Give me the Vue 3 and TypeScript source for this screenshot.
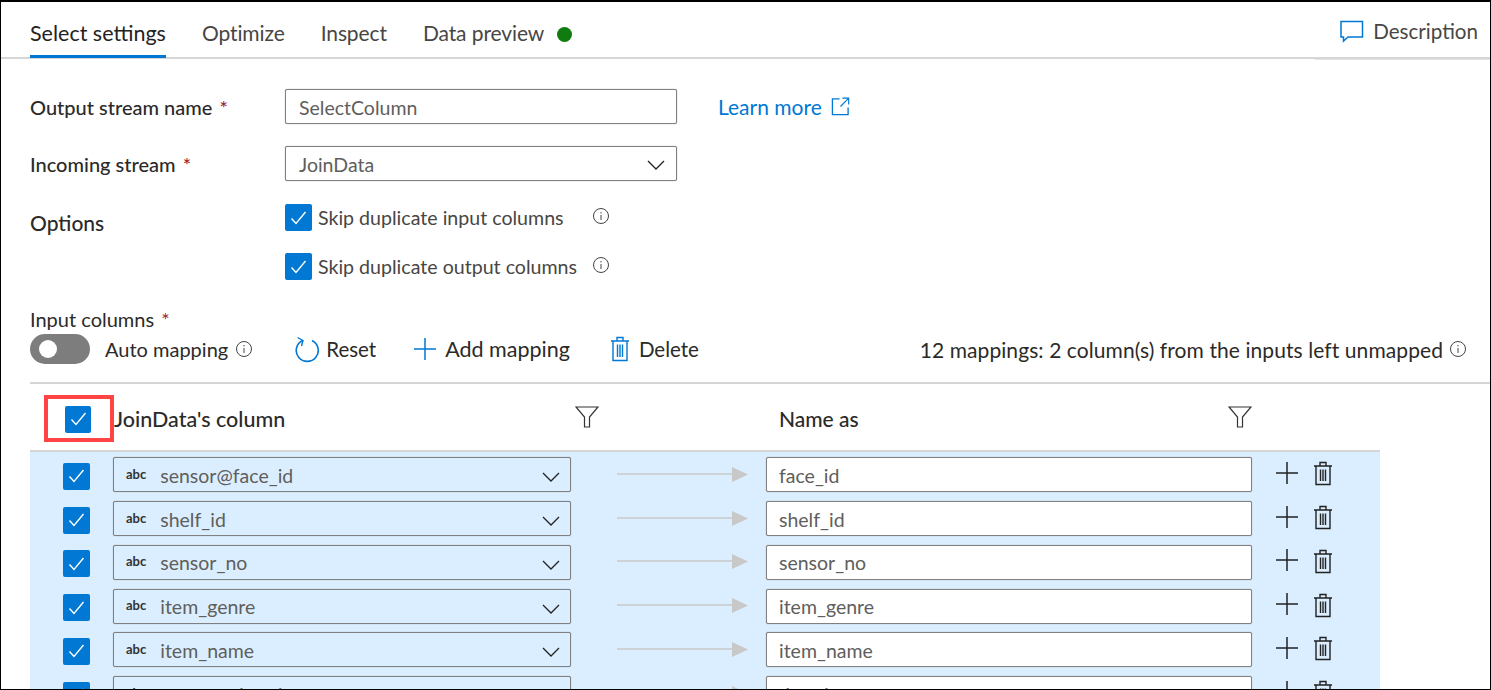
<template>
  <div class="frame">
    <div class="tabs">
      <div class="tab active">Select settings</div>
      <div class="tab">Optimize</div>
      <div class="tab">Inspect</div>
      <div class="tab">Data preview <span class="dot" /></div>
      <div class="desc">
        <svg width="26" height="24" viewBox="0 0 26 24" fill="none" stroke="#0078d4" stroke-width="1.5"><path d="M2 2.5h21.5v15.5H9l-4.5 4v-4H2z" /></svg>
        <span>Description</span>
      </div>
    </div>

    <div class="form">
      <div class="form-row first">
        <label>Output stream name <em>*</em></label>
        <div class="box">SelectColumn</div>
        <a class="learn">Learn more
          <svg width="19" height="19" viewBox="0 0 20 20" fill="none" stroke="#0078d4" stroke-width="1.4"><path d="M9 2H1.5v16.5H18V11" /><path d="M12 1.2h6.6v6.6M18.4 1.5 10 10" stroke-width="1.2" /></svg>
        </a>
      </div>
      <div class="form-row second">
        <label>Incoming stream <em>*</em></label>
        <div class="box select">JoinData
          <svg class="chev" width="18" height="10" viewBox="0 0 18 10" fill="none" stroke="#222" stroke-width="1.3"><path d="M1 1l8 8 8-8" /></svg>
        </div>
      </div>
      <div class="form-row options">
        <label>Options</label>
        <div class="checks">
          <div v-for="o in options" :key="o.text" class="check-line">
            <span class="cb"><svg width="17" height="14" viewBox="0 0 17 14" fill="none" stroke="#fff" stroke-width="1.4"><path d="M1.5 7.5l4.5 5 9.5-11.5" /></svg></span>
            <span class="check-text">{{ o.text }}</span>
            <svg class="info" width="18" height="18" viewBox="0 0 18 18" fill="none" stroke="#444" stroke-width="1"><circle cx="9" cy="9" r="7.5" /><path d="M9 8v5M9 5v1.4" /></svg>
          </div>
        </div>
      </div>
    </div>

    <div class="input-head">Input columns <em>*</em></div>
    <div class="toolbar">
      <span class="toggle"><span class="knob" /></span>
      <span class="auto">Auto mapping</span>
      <svg class="info auto-info" width="18" height="18" viewBox="0 0 18 18" fill="none" stroke="#444" stroke-width="1"><circle cx="9" cy="9" r="7.5" /><path d="M9 8v5M9 5v1.4" /></svg>
      <span class="action reset">
        <svg width="26" height="28" viewBox="0 0 26 28" fill="none" stroke="#0078d4" stroke-width="1.6"><path d="M8.5 5.5a11 11 0 1 0 9.5 0" /><path d="M3.5 2.5l5.5 3-1.5 5.5" stroke-width="1.4" /></svg>
        Reset
      </span>
      <span class="action add">
        <svg width="24" height="24" viewBox="0 0 24 24" stroke="#0078d4" stroke-width="1.5"><path d="M12 1v22M1 12h22" /></svg>
        Add mapping
      </span>
      <span class="action del">
        <svg width="20" height="26" viewBox="0 0 20 26" fill="none" stroke="#0078d4" stroke-width="1.4"><path d="M1 5h18M7 5V1.5h6V5M3 5v19.5h14V5M7.5 8.5v12.5M10 8.5v12.5M12.5 8.5v12.5" /></svg>
        Delete
      </span>
      <span class="summary">12 mappings: 2 column(s) from the inputs left unmapped</span>
      <svg class="info" width="18" height="18" viewBox="0 0 18 18" fill="none" stroke="#444" stroke-width="1"><circle cx="9" cy="9" r="7.5" /><path d="M9 8v5M9 5v1.4" /></svg>
    </div>

    <div class="table-head">
      <div class="cb-cell">
        <span class="cb head-cb"><svg width="17" height="14" viewBox="0 0 17 14" fill="none" stroke="#fff" stroke-width="1.4"><path d="M1.5 7.5l4.5 5 9.5-11.5" /></svg></span>
        <span class="red-box" />
      </div>
      <div class="head-left">JoinData's column</div>
      <svg class="filter" width="24" height="22" viewBox="0 0 24 22" fill="none" stroke="#333" stroke-width="1.2"><path d="M1 1h22l-8.5 10v10h-5V11z" /></svg>
      <div class="head-right">Name as</div>
      <svg class="filter" width="24" height="22" viewBox="0 0 24 22" fill="none" stroke="#333" stroke-width="1.2"><path d="M1 1h22l-8.5 10v10h-5V11z" /></svg>
    </div>

    <div class="rows">
      <div v-for="c in columns" :key="c.from" class="row">
        <div class="cb-cell">
          <span class="cb"><svg width="17" height="14" viewBox="0 0 17 14" fill="none" stroke="#fff" stroke-width="1.4"><path d="M1.5 7.5l4.5 5 9.5-11.5" /></svg></span>
        </div>
        <div class="box src">
          <span class="abc">abc</span>
          <span>{{ c.from }}</span>
          <svg class="chev" width="18" height="10" viewBox="0 0 18 10" fill="none" stroke="#222" stroke-width="1.3"><path d="M1 1l8 8 8-8" /></svg>
        </div>
        <svg class="arrow" width="131" height="16" viewBox="0 0 131 16"><path d="M0 7h116" stroke="#c8c8c8" stroke-width="1.5" /><path d="M115 0l16 7.5L115 15z" fill="#c8c8c8" /></svg>
        <div class="box dest">{{ c.to }}</div>
        <svg class="plus" width="24" height="24" viewBox="0 0 24 24" stroke="#222" stroke-width="1.5"><path d="M12 1v22M1 12h22" /></svg>
        <svg class="trash" width="20" height="25" viewBox="0 0 20 25" fill="none" stroke="#222" stroke-width="1.4"><path d="M1 5h18M7 5V1.5h6V5M3 5v18.5h14V5M7.5 8.5v11.5M10 8.5v11.5M12.5 8.5v11.5" /></svg>
      </div>
    </div>
  </div>
</template>

<script setup lang="ts">
interface Column { from: string; to: string }

const options = [
  { text: 'Skip duplicate input columns' },
  { text: 'Skip duplicate output columns' },
]

const columns: Column[] = [
  { from: 'sensor@face_id', to: 'face_id' },
  { from: 'shelf_id', to: 'shelf_id' },
  { from: 'sensor_no', to: 'sensor_no' },
  { from: 'item_genre', to: 'item_genre' },
  { from: 'item_name', to: 'item_name' },
  { from: 'sensor@datetime', to: 'datetime' },
]
</script>

<style scoped>
.frame {
  box-sizing: border-box;
  width: 1491px;
  height: 690px;
  overflow: hidden;
  background: #fff;
  border: solid #000;
  border-width: 2px 1px 1px 1px;
  font-family: Lato, "Liberation Sans", sans-serif;
  font-size: 21px;
  color: #2b2a29;
}
em { font-style: normal; color: #a4262c; margin-left: 2px; }

.tabs {
  display: flex;
  height: 57px;
  padding-left: 29px;
  gap: 36px;
  border-bottom: 2px solid #d6d6d6;
  box-sizing: border-box;
  position: relative;
}
.tabs::after {
  content: "";
  position: absolute;
  right: 0;
  bottom: -3px;
  width: 175px;
  height: 1px;
  background: #e4e4e4;
}
.tab { padding-top: 18px; color: #484644; white-space: nowrap; letter-spacing: -0.1px; }
.tab.active {
  color: #242322;
  border-bottom: 3px solid #0078d4;
  box-sizing: border-box;
  height: 56px;
  font-size: 21.5px;
  padding-top: 18px;
  letter-spacing: 0;
}
.dot {
  display: inline-block;
  width: 15px;
  height: 15px;
  border-radius: 50%;
  background: #107c10;
  margin-left: 8px;
  vertical-align: -1px;
}
.desc {
  margin-left: auto;
  display: flex;
  align-items: flex-start;
  gap: 8px;
  padding: 17px 12px 0 0;
  color: #484644;
  font-size: 20.6px;
}

.form { padding-left: 29px; }
.form-row { display: flex; align-items: center; }
.form-row label { width: 255px; flex: none; color: #2b2a29; font-weight: 500; font-size: 20px; }
.form-row.first { margin-top: 30px; }
.form-row.second { margin-top: 22px; }
.box {
  box-sizing: border-box;
  height: 35px;
  border: 1px solid #808080;
  box-shadow: 0 0 1px #888;
  border-radius: 2px;
  background: #fff;
  color: #605e5c;
  display: flex;
  align-items: center;
  padding-left: 13px;
  padding-top: 1px;
  position: relative;
  font-size: 19.5px;
}
.form .box { width: 392px; }
.chev { margin-left: auto; margin-right: 11px; margin-top: 1px; }
.learn {
  display: flex;
  align-items: center;
  gap: 9px;
  margin-left: 41px;
  color: #0078d4;
}
.options { align-items: flex-start; margin-top: 23px; }
.options label { padding-top: 6px; font-size: 21px; }
.checks { display: flex; flex-direction: column; gap: 22px; }
.check-line { display: flex; align-items: center; height: 27px; }
.check-text { margin-left: 6px; width: 274px; font-size: 19.6px; color: #484644; }
.info { flex: none; }
.check-line .info { margin-top: -3px; }

.cb {
  width: 27px;
  height: 27px;
  border-radius: 2px;
  background: #0078d4;
  display: flex;
  align-items: center;
  justify-content: center;
  flex: none;
}

.input-head { margin: 27px 0 0 29px; font-size: 20px; line-height: 24px; }
.toolbar {
  display: flex;
  align-items: center;
  height: 36px;
  margin-left: 29px;
  padding-right: 23px;
}
.toggle {
  width: 60px;
  height: 30px;
  border-radius: 15px;
  background: #7d7d7d;
  display: flex;
  align-items: center;
  padding-left: 9px;
  box-sizing: border-box;
}
.knob { width: 18px; height: 18px; border-radius: 50%; background: #fff; }
.auto { margin-left: 15px; font-size: 20px; }
.auto-info { margin-left: 7px; }
.action { display: flex; align-items: center; gap: 7px; white-space: nowrap; color: #2b2a29; }
.reset { margin-left: 41px; gap: 6px; font-size: 20.5px; }
.add { margin-left: 37px; gap: 8px; font-size: 21.5px; }
.del { margin-left: 40px; gap: 9px; font-size: 20.5px; }
.summary { margin-left: auto; margin-right: 6px; white-space: nowrap; letter-spacing: 0.08px; }

.table-head {
  display: flex;
  align-items: center;
  height: 70px;
  margin: 15px 0 0 29px;
  border-top: 2px solid #d6d6d6;
  border-bottom: 2px solid #d6d6d6;
  box-sizing: border-box;
  width: 1350px;
  position: relative;
  font-weight: 500;
  font-size: 21.5px;
}
.table-head::before {
  content: "";
  position: absolute;
  top: -2px;
  left: 1350px;
  width: 113px;
  height: 2px;
  background: #d6d6d6;
}
.cb-cell {
  width: 83px;
  flex: none;
  display: flex;
  justify-content: center;
  padding-left: 9px;
  box-sizing: border-box;
  position: relative;
}
.table-head .cb-cell { width: 84px; padding-left: 12px; }
.head-cb { width: 26px; margin-top: 4px; }
.red-box {
  position: absolute;
  left: 14px;
  top: -7px;
  width: 70px;
  height: 47px;
  border: 4px solid #f44;
  box-sizing: border-box;
}
.head-left { width: 461px; padding-top: 3px; }
.filter { margin-top: -1px; }
.head-right { margin-left: 180px; width: 449px; padding-top: 3px; font-size: 21px; }

.rows { width: 1350px; margin-left: 29px; background: #dbeeff; padding-top: 1px; }
.row { display: flex; align-items: center; height: 43.75px; }
.row .cb { margin-top: 3px; }
.src { width: 458px; background: #dbeeff; padding-left: 12px; }
.src .chev { margin-right: 10px; margin-top: 4px; }
.abc { font-size: 13px; font-weight: 700; color: #333; margin-right: 14px; margin-top: -3px; }
.arrow { margin-left: 46px; flex: none; }
.dest { width: 486px; margin-left: 18px; padding-left: 12px; }
.plus { margin-left: 23px; margin-top: -4px; flex: none; }
.trash { margin-left: 14px; margin-top: -2px; flex: none; }
</style>

<style>
html, body { margin: 0; overflow: hidden; background: #fff; }
</style>
